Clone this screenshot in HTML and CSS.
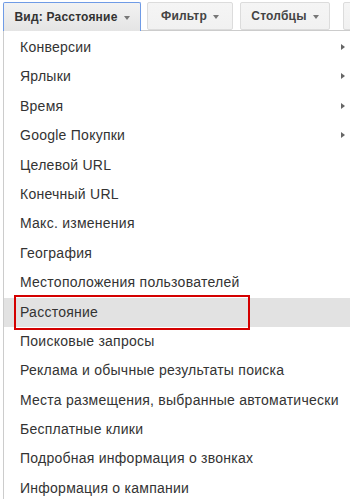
FILE: index.html
```html
<!DOCTYPE html>
<html lang="ru">
<head>
<meta charset="utf-8">
<link rel="stylesheet" href="styles.css">
</head>
<body>
<div class="page">
  <div class="toolbar">
    <div class="btn btn-active">Вид: Расстояние <span class="caret"></span></div>
    <div class="btn btn-filter">Фильтр <span class="caret"></span></div>
    <div class="btn btn-cols">Столбцы <span class="caret"></span></div>
    <div class="btn btn-more"></div>
  </div>
  <ul class="menu">
    <li class="item sub">Конверсии</li>
    <li class="item sub">Ярлыки</li>
    <li class="item sub">Время</li>
    <li class="item sub">Google Покупки</li>
    <li class="item">Целевой URL</li>
    <li class="item">Конечный URL</li>
    <li class="item">Макс. изменения</li>
    <li class="item">География</li>
    <li class="item">Местоположения пользователей</li>
    <li class="item selected">Расстояние<span class="mark"></span></li>
    <li class="item">Поисковые запросы</li>
    <li class="item">Реклама и обычные результаты поиска</li>
    <li class="item">Места размещения, выбранные автоматически</li>
    <li class="item">Бесплатные клики</li>
    <li class="item">Подробная информация о звонках</li>
    <li class="item">Информация о кампании</li>
  </ul>
</div>
</body>
</html>
```

FILE: styles.css
```css
html, body {
  margin: 0;
  padding: 0;
  background: #fff;
  overflow: hidden;
}
.page {
  width: 350px;
  height: 499px;
  padding: 2px 0 0 3px;
  box-sizing: border-box;
  font-family: "Liberation Sans", Arial, sans-serif;
}
.toolbar {
  display: flex;
  gap: 6px;
  height: 28px;
  position: relative;
  z-index: 2;
}
.btn {
  box-sizing: border-box;
  height: 28px;
  border: 1px solid #dcdcdc;
  border-radius: 2px;
  background: linear-gradient(#f5f5f5, #f1f1f1);
  color: #444;
  font-size: 12px;
  font-weight: bold;
  letter-spacing: 0.2px;
  display: flex;
  align-items: center;
  justify-content: center;
  gap: 6px;
  white-space: nowrap;
  flex: none;
}
.btn-active {
  width: 138px;
  border-color: #6f9be6;
  border-bottom: none;
  height: 29px;
  background: linear-gradient(#f2f2f2, #e4e4e4);
  color: #333;
  border-radius: 2px 2px 0 0;
}
.btn-filter { width: 86px; }
.btn-cols { width: 90px; margin-left: 1px; }
.btn-more { width: 20px; margin-left: 7px; }
.caret {
  width: 0;
  height: 0;
  border-left: 3.5px solid transparent;
  border-right: 3.5px solid transparent;
  border-top: 4px solid #777;
  margin-top: 1px;
}
.menu {
  list-style: none;
  margin: 0;
  padding: 2px 0 0 0;
  border: 1px solid #ccc;
  border-right: none;
  border-bottom: none;
  background: #fff;
  position: relative;
  z-index: 1;
}
.item {
  position: relative;
  height: 29.4px;
  line-height: 29.4px;
  padding-left: 16px;
  font-size: 14px;
  letter-spacing: 0.25px;
  color: #333;
  white-space: nowrap;
}
.item.sub::after {
  content: "";
  position: absolute;
  right: 5px;
  top: 11px;
  width: 0;
  height: 0;
  border-top: 3.5px solid transparent;
  border-bottom: 3.5px solid transparent;
  border-left: 4px solid #666;
}
.item.selected {
  background: #e2e2e2;
}
.mark {
  position: absolute;
  left: 10px;
  top: -3px;
  width: 236px;
  height: 35px;
  box-sizing: border-box;
  border: 2px solid #d40000;
}
```
